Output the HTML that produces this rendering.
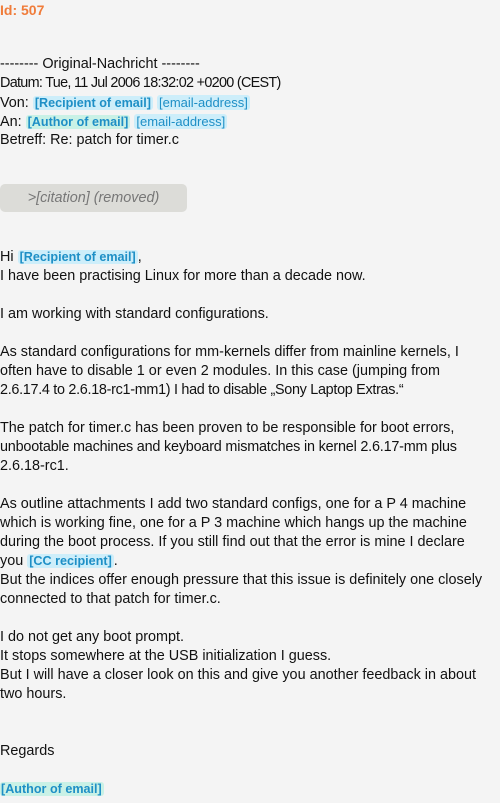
<!DOCTYPE html>
<html><head><meta charset="utf-8"><style>
body{margin:0;background:#f4f4f4;width:500px;height:803px;overflow:hidden;font-family:"Liberation Sans",sans-serif;font-size:14.4px;color:#111;}
.l{position:absolute;left:0;white-space:nowrap;line-height:19px;height:19px;}
.id{color:#f07c3a;font-weight:bold;font-size:14px}
.r{background:#cdeefa;color:#1e8fc6;font-weight:bold;border-radius:3px;padding:0 2px;font-size:12.6px}
.a{background:#c9f1e6;color:#1e8fc6;font-weight:bold;border-radius:3px;padding:0 2px;font-size:12.6px}
.e{background:#cdeefa;color:#1e8fc6;border-radius:3px;padding:0 2px;font-size:13px}
.cit{position:absolute;left:0;top:184px;width:187px;height:28px;background:#dcdcd8;border-radius:5px;color:#777;font-style:italic;text-align:center;line-height:28px;font-size:14.4px}
</style></head><body>
<div class="l id" style="top:1px">Id: 507</div>
<div class="l" style="top:55px">-------- Original-Nachricht --------</div>
<div class="l" style="top:74px;letter-spacing:-0.7px">Datum: Tue, 11 Jul 2006 18:32:02 +0200 (CEST)</div>
<div class="l" style="top:93px">Von: <span class="r">[Recipient of email]</span> <span class="e">[email-address]</span></div>
<div class="l" style="top:112px">An: <span class="a">[Author of email]</span> <span class="e">[email-address]</span></div>
<div class="l" style="top:131px">Betreff: Re: patch for timer.c</div>
<div class="cit">&gt;[citation] (removed)</div>
<div class="l" style="top:248px">Hi <span class="r">[Recipient of email]</span>,</div>
<div class="l" style="top:267px">I have been practising Linux for more than a decade now.</div>
<div class="l" style="top:305px">I am working with standard configurations.</div>
<div class="l" style="top:343px">As standard configurations for mm-kernels differ from mainline kernels, I</div>
<div class="l" style="top:362px">often have to disable 1 or even 2 modules. In this case (jumping from</div>
<div class="l" style="top:381px;letter-spacing:-0.3px">2.6.17.4 to 2.6.18-rc1-mm1) I had to disable „Sony Laptop Extras.“</div>
<div class="l" style="top:419px">The patch for timer.c has been proven to be responsible for boot errors,</div>
<div class="l" style="top:438px;letter-spacing:-0.2px">unbootable machines and keyboard mismatches in kernel 2.6.17-mm plus</div>
<div class="l" style="top:457px">2.6.18-rc1.</div>
<div class="l" style="top:495px">As outline attachments I add two standard configs, one for a P 4 machine</div>
<div class="l" style="top:514px">which is working fine, one for a P 3 machine which hangs up the machine</div>
<div class="l" style="top:533px">during the boot process. If you still find out that the error is mine I declare</div>
<div class="l" style="top:552px">you <span class="r">[CC recipient]</span>.</div>
<div class="l" style="top:571px">But the indices offer enough pressure that this issue is definitely one closely</div>
<div class="l" style="top:590px">connected to that patch for timer.c.</div>
<div class="l" style="top:628px">I do not get any boot prompt.</div>
<div class="l" style="top:647px">It stops somewhere at the USB initialization I guess.</div>
<div class="l" style="top:666px">But I will have a closer look on this and give you another feedback in about</div>
<div class="l" style="top:685px">two hours.</div>
<div class="l" style="top:742px">Regards</div>
<div class="l" style="top:780px"><span class="a" style="padding:0 2px 0 1px">[Author of email]</span></div>
</body></html>
